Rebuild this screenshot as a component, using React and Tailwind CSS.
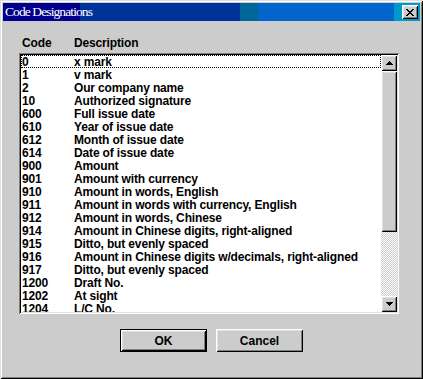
const rows = [
  ["0", "x mark"],
  ["1", "v mark"],
  ["2", "Our company name"],
  ["10", "Authorized signature"],
  ["600", "Full issue date"],
  ["610", "Year of issue date"],
  ["612", "Month of issue date"],
  ["614", "Date of issue date"],
  ["900", "Amount"],
  ["901", "Amount with currency"],
  ["910", "Amount in words, English"],
  ["911", "Amount in words with currency, English"],
  ["912", "Amount in words, Chinese"],
  ["914", "Amount in Chinese digits, right-aligned"],
  ["915", "Ditto, but evenly spaced"],
  ["916", "Amount in Chinese digits w/decimals, right-aligned"],
  ["917", "Ditto, but evenly spaced"],
  ["1200", "Draft No."],
  ["1202", "At sight"],
  ["1204", "L/C No."],
];

const raised =
  "shadow-[inset_1px_1px_#fff,inset_-1px_-1px_#000,inset_2px_2px_#dfdfdf,inset_-2px_-2px_#808080]";

function Arrow({ down }) {
  return (
    <svg width="7" height="4" viewBox="0 0 7 4" className={down ? "rotate-180" : ""}>
      <path d="M3 0h1v1h1v1h1v1h1v1H0V3h1V2h1V1h1z" fill="#000" />
    </svg>
  );
}

function Button({ children, isDefault }) {
  return (
    <div className={`h-[23px] w-[87px] text-[12px] font-bold ${isDefault ? "border border-black" : ""}`}>
      <div className={`flex h-full w-full items-center justify-center bg-[#cccccc] ${raised}`}>
        {children}
      </div>
    </div>
  );
}

export default function App() {
  return (
    <div
      className="h-[379px] w-[423px] bg-[#cccccc] p-[3px] shadow-[inset_1px_1px_#dfdfdf,inset_-1px_-1px_#000,inset_2px_2px_#fff,inset_-2px_-2px_#808080]"
      style={{ fontFamily: '"Liberation Sans", Arial, sans-serif' }}
    >
      {/* title bar */}
      <div className="flex h-[18px] items-center justify-between bg-[linear-gradient(90deg,#00008c_0px,#00008c_77px,#003399_77px,#003399_237px,#006699_237px,#006699_255px,#0066cc_255px,#0066cc_391px,#0099cc_391px)] pl-[2px] pr-[2px]">
        <span
          className="text-[13.5px] leading-[18px] tracking-[-0.9px] text-white"
          style={{ fontFamily: '"Liberation Serif", "Times New Roman", serif' }}
        >
          Code Designations
        </span>
        <div className={`flex h-[14px] w-[16px] items-center justify-center bg-[#cccccc] ${raised}`}>
          <svg width="8" height="7" viewBox="0 0 8 7">
            <path d="M0 0h2v1h1v1h2V1h1V0h2v1H7v1H6v1H5v1h1v1h1v1h1v1H6V6H5V5H3v1H2v1H0V6h1V5h1V4h1V3H2V2H1V1H0z" fill="#000" />
          </svg>
        </div>
      </div>

      <div className="mt-[16px] px-[16px]">
        {/* column headers */}
        <div className="flex pl-[3px] text-[12px] font-bold leading-[13px] tracking-[-0.15px] text-black">
          <div className="w-[52px]">Code</div>
          <div>Description</div>
        </div>

        {/* list box */}
        <div className="mt-[3px] flex h-[261px] w-[380px] bg-white p-[2px] shadow-[inset_1px_1px_#808080,inset_-1px_-1px_#fff,inset_2px_2px_#000,inset_-2px_-2px_#dfdfdf]">
          <div className="h-full w-[360px] overflow-hidden">
            {rows.map(([code, desc], i) => (
              <div
                key={code}
                className={`flex h-[13px] text-[12px] font-bold leading-[12px] tracking-[-0.15px] text-black ${
                  i === 0 ? "border border-dotted border-black" : "border border-transparent"
                }`}
              >
                <div className="w-[52px] shrink-0">{code}</div>
                <div className="whitespace-nowrap">{desc}</div>
              </div>
            ))}
          </div>

          {/* scrollbar */}
          <div className="flex h-full w-[16px] flex-col">
            <div className={`flex h-[16px] items-center justify-center bg-[#cccccc] ${raised}`}>
              <Arrow />
            </div>
            <div className={`h-[161px] bg-[#cccccc] ${raised}`} />
            <div className="flex-1 bg-[repeating-conic-gradient(#fff_0_25%,#cccccc_0_50%)] bg-[length:2px_2px]" />
            <div className={`flex h-[16px] items-center justify-center bg-[#cccccc] ${raised}`}>
              <Arrow down />
            </div>
          </div>
        </div>
      </div>

      {/* buttons */}
      <div className="mt-[15px] flex justify-center gap-[9px]">
        <Button isDefault>OK</Button>
        <Button>Cancel</Button>
      </div>
    </div>
  );
}
